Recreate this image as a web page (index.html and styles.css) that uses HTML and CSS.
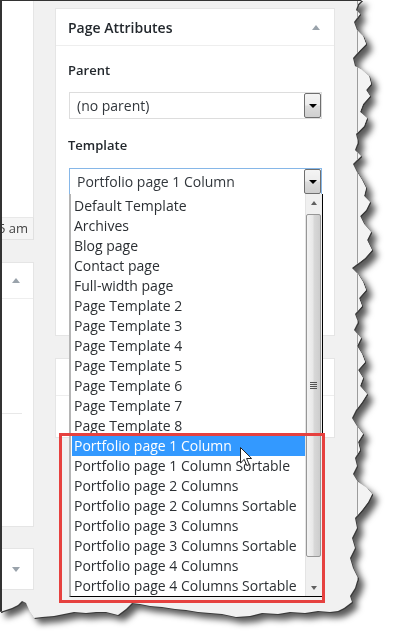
FILE: index.html
```
<!DOCTYPE html>
<html lang="en">
<head>
	<meta charset="UTF-8">
	<title>Page Attributes</title>
	<link rel="stylesheet" href="styles.css">
</head>
<body>
	<div class="shot">
		<div class="frame">
			<div class="side">
				<div class="side-top"></div>
				<div class="side-btn"><span>5 am</span></div>
				<div class="side-box">
					<div class="side-head"><i class="arr up"></i></div>
					<div class="side-rule"></div>
				</div>
				<div class="side-box small"><i class="arr down"></i></div>
			</div>
			<div class="main">
				<div class="postbox">
					<div class="hndle">
						<h2>Page Attributes</h2>
						<i class="arr up"></i>
					</div>
					<div class="inside">
						<p class="label">Parent</p>
						<div class="select"><span>(no parent)</span><b class="btn"></b></div>
						<p class="label">Template</p>
						<div class="select focus"><span>Portfolio page 1 Column</span><b class="btn"></b>
							<div class="dropdown">
								<ul class="options">
									<li>Default Template</li>
									<li>Archives</li>
									<li>Blog page</li>
									<li>Contact page</li>
									<li>Full-width page</li>
									<li>Page Template 2</li>
									<li>Page Template 3</li>
									<li>Page Template 4</li>
									<li>Page Template 5</li>
									<li>Page Template 6</li>
									<li>Page Template 7</li>
									<li>Page Template 8</li>
									<li class="hover">Portfolio page 1 Column</li>
									<li>Portfolio page 1 Column Sortable</li>
									<li>Portfolio page 2 Columns</li>
									<li>Portfolio page 2 Columns Sortable</li>
									<li>Portfolio page 3 Columns</li>
									<li>Portfolio page 3 Columns Sortable</li>
									<li>Portfolio page 4 Columns</li>
									<li>Portfolio page 4 Columns Sortable</li>
								</ul>
								<div class="scroll">
									<div class="sb-btn"><i class="sb-up"></i></div>
									<div class="thumb"><i class="grip"></i></div>
									<div class="track"></div>
									<div class="sb-btn"><i class="sb-down"></i></div>
								</div>
							</div>
						</div>
					</div>
				</div>
				<div class="postbox second"><div class="hndle"></div></div>
			</div>
			<div class="chrome"></div>
			<div class="mark"></div>
			<svg class="cursor" width="13" height="20" viewBox="0 0 13 20"><path d="M0.5 0.5 L0.5 16 L4.2 12.4 L6.8 18.6 L9.2 17.6 L6.6 11.5 L11.6 11.5 Z" fill="#fff" stroke="#222" stroke-width="1"/></svg>
		</div>
	</div>
</body>
</html>
```
FILE: styles.css
```
body,div,h2,p,ul,li{margin:0;padding:0}
body{background:#fff;font-family:"Open Sans","Noto Sans",sans-serif;color:#32373c}
ul{list-style:none}

.shot{width:394px;height:644px;filter:drop-shadow(1px 1px 0 #3a3a3a) drop-shadow(5px 5px 3px rgba(0,0,0,0.65))}
.frame{position:relative;display:flex;width:382px;height:632px;box-sizing:border-box;background:#f1f1f1;border-top:1px solid #333;border-left:2px solid #333;
	clip-path:polygon(0 0,362px 0,358px 4px,356px 10px,360px 14px,354px 22px,357px 30px,363px 36px,366px 44px,360px 50px,353px 58px,355px 66px,362px 70px,369px 76px,371px 84px,366px 90px,370px 96px,363px 104px,360px 112px,367px 118px,364px 126px,356px 134px,358px 142px,355px 150px,361px 156px,353px 164px,357px 172px,362px 180px,366px 188px,364px 196px,370px 202px,366px 210px,360px 216px,364px 224px,371px 232px,367px 240px,372px 250px,365px 258px,352px 268px,358px 274px,363px 282px,366px 290px,359px 298px,362px 306px,355px 314px,358px 322px,354px 330px,361px 338px,357px 346px,362px 354px,365px 362px,358px 370px,363px 378px,360px 386px,367px 394px,362px 402px,356px 410px,352px 418px,357px 426px,363px 434px,358px 442px,360px 450px,355px 458px,357px 466px,353px 474px,358px 482px,367px 488px,372px 494px,368px 502px,362px 510px,355px 518px,357px 528px,352px 538px,355px 548px,350px 558px,353px 568px,358px 578px,355px 588px,350px 596px,352px 602px,344px 608px,338px 611px,330px 612px,318px 611px,305px 613px,290px 612px,278px 614px,262px 613px,250px 616px,236px 617px,222px 614px,210px 613px,198px 612px,186px 610px,175px 609px,162px 607px,150px 606px,140px 604px,132px 603px,126px 609px,118px 615px,106px 612px,96px 612px,86px 613px,74px 612px,64px 614px,54px 616px,42px 617px,34px 618px,30px 612px,26px 603px,22px 601px,18px 605px,12px 608px,6px 610px,0 612px)}

/* left column, cut off */
.side{width:32px;flex:none}
.side-top{height:216px;background:#fff;border-right:1px solid #e5e5e5;box-sizing:border-box}
.side-btn{height:23px;background:#f5f5f5;border-top:1px solid #e8e8e8;border-bottom:1px solid #e3e3e3;border-right:1px solid #e0e0e0;box-sizing:border-box;overflow:hidden;white-space:nowrap;font-size:13px;line-height:21px;color:#444}
.side-btn span{display:block;margin-left:-4px}
.side-box{margin-top:22px;height:265px;background:#fff;border:1px solid #e5e5e5;border-left:0;box-sizing:border-box}
.side-head{height:35px;border-bottom:1px solid #eee;display:flex;align-items:center;padding-left:10px}
.side-rule{margin-top:114px;width:20px;border-top:1px solid #e8e8e8}
.side-box.small{margin-top:21px;height:42px;display:flex;align-items:center;padding-left:10px}

.arr{display:block;width:0;height:0;border-left:4px solid transparent;border-right:4px solid transparent}
.arr.up{border-bottom:5px solid #9aa3ab}
.arr.down{border-top:5px solid #9aa3ab}

/* main column */
.main{width:280px;flex:none;margin-left:21px}
.postbox{margin-top:7px;height:328px;background:#fff;border:1px solid #e5e5e5;box-sizing:border-box}
.hndle{height:36px;border-bottom:1px solid #eee;display:flex;align-items:center;justify-content:space-between;padding:0 14px 0 12px}
.hndle h2{font-size:14px;font-weight:600;color:#23282d}
.inside{padding:0 12px 0 13px}
.label{font-size:13px;font-weight:600;line-height:20px;color:#23282d;margin:14px 0 0 -1px}
.label + .select{margin-top:12px}
.inside .select + .label{margin-top:16px}
.select{position:relative;display:flex;height:27px;box-sizing:border-box;border:1px solid #ddd;background:#fff;font-size:14px;color:#32373c}
.select span{flex:1;line-height:25px;padding-left:7px;white-space:nowrap}
.select.focus{border-color:#86b7e8;margin-top:13px !important}
.btn{width:17px;flex:none;box-sizing:border-box;border:1px solid #6f6f6f;border-radius:2px;background:linear-gradient(#f4f4f4,#ececec 48%,#dcdcdc 52%,#cfcfcf);display:flex;align-items:center;justify-content:center}
.btn:after{content:"";border-left:4px solid transparent;border-right:4px solid transparent;border-top:4px solid #000}
.postbox.second{margin-top:22px;height:80px}

/* open template list */
.dropdown{position:absolute;top:100%;left:-1px;width:254px;display:flex;background:#fff;border-left:2px solid #b5b5b5;border-right:1px solid #000;border-bottom:1px solid #000;box-sizing:border-box;z-index:2}
.options{flex:1;padding:2px 0 0 1px;font-size:14px;color:#2b2f33}
.options li{height:20px;line-height:20px;padding-left:2px;white-space:nowrap;overflow:hidden}
.options li.hover{background:#3399ff;color:#fff}
.scroll{width:17px;flex:none;display:flex;flex-direction:column;background:#f0f0f0;border-left:1px solid #e4e4e4;box-sizing:border-box}
.sb-btn{height:17px;display:flex;align-items:center;justify-content:center}
.sb-up{border-left:3px solid transparent;border-right:3px solid transparent;border-bottom:4px solid #606060}
.sb-down{border-left:3px solid transparent;border-right:3px solid transparent;border-top:4px solid #606060}
.thumb{margin:3px 1px 0 0;height:343px;border:1px solid #979797;border-radius:2px;box-sizing:border-box;background:linear-gradient(90deg,#f3f3f3,#e8e8e8 45%,#d8d8d8 55%,#cdcdcd);display:flex;align-items:center;justify-content:center}
.grip{display:block;width:7px;height:7px;background:repeating-linear-gradient(#555 0 1px,transparent 1px 2px)}
.track{flex:1}

.chrome{flex:1;margin-left:22px;border-left:1px solid #9c9c9c;background:#f3f3f3}

/* annotation + pointer */
.mark{position:absolute;left:57px;top:432px;width:266px;height:170px;border:3px solid #e6413f;box-sizing:border-box;z-index:3}
.cursor{position:absolute;left:238px;top:446px;z-index:4}
```
